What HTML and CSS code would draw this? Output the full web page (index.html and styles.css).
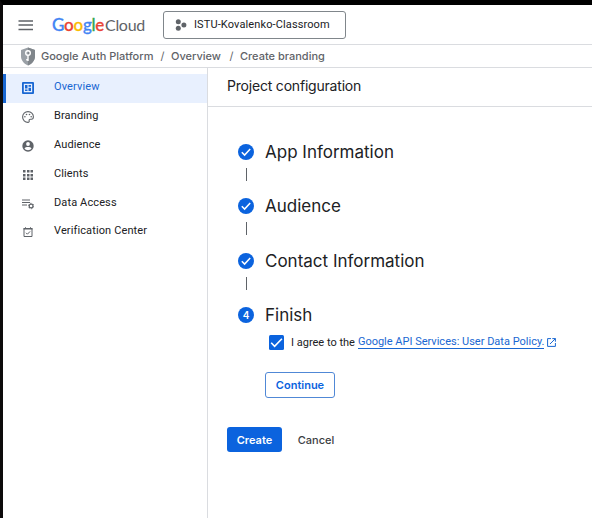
FILE: index.html
```html
<!DOCTYPE html>
<html lang="en">
<head>
<meta charset="utf-8">
<title>Create branding – Google Auth Platform</title>
<link rel="stylesheet" href="styles.css">
</head>
<body>
<div class="app">
  <header class="topbar">
    <svg class="menu" width="16" height="12" viewBox="0 0 16 12"><path d="M.5 2h14.5M.5 6h14.5M.5 10.500h14.500" stroke="#5f6368" stroke-width="1.500"/></svg>
    <div class="logo"><span class="google"><span class="b">G</span><span class="r">o</span><span class="y">o</span><span class="b">g</span><span class="g">l</span><span class="r">e</span></span><span class="cloud">Cloud</span></div>
    <div class="project">
      <svg width="12" height="12" viewBox="0 0 12 12" fill="#5f6368"><circle cx="3.300" cy="2.700" r="2.500"/><circle cx="3.300" cy="9.300" r="2.500"/><circle cx="8.900" cy="6" r="2.500"/></svg>
      <span>ISTU-Kovalenko-Classroom</span>
    </div>
  </header>
  <nav class="crumbs">
    <svg width="16" height="19" viewBox="0 0 16 19"><path d="M8 .5 15 3v6c0 4.500-3 7.800-7 9.500C4 16.800 1 13.500 1 9V3z" fill="#9aa0a6"/><path d="M8 .5 15 3v6c0 4.500-3 7.800-7 9.500z" fill="#80868b"/><circle cx="8" cy="6" r="2.300" fill="none" stroke="#fff" stroke-width="1.400"/><path d="M8 8.300V14M8 12.800H6.200" fill="none" stroke="#fff" stroke-width="1.400"/></svg>
    <span class="c1">Google Auth Platform</span><i>/</i><span class="c2">Overview</span><i>/</i><span class="c3">Create branding</span>
  </nav>
  <div class="body">
    <aside class="side">
      <a class="item active"><svg viewBox="0 0 12 12"><path fill="#1967d2" fill-rule="evenodd" d="M1 0h10a1 1 0 0 1 1 1v10a1 1 0 0 1-1 1H1a1 1 0 0 1-1-1V1a1 1 0 0 1 1-1zm.8 1.800v8.400h8.400V1.800z"/><path d="M3 3h2.500v3.500H3zM6.500 3H9v1.700H6.500zM3 7.500h2.500V9H3zM6.500 5.700H9V9H6.500z" fill="#1967d2"/></svg><span>Overview</span></a>
      <a class="item"><svg viewBox="0 0 12 12"><path d="M6 .6C3 .6.6 3 .6 6S3 11.400 6 11.400c.9 0 1.300-.6 1.200-1.300-.3-.9.100-1.900 1.200-1.900h1.100c1.100 0 1.900-.9 1.900-2.400C11.400 2.900 9 .6 6 .6z" fill="none" stroke="#5f6368" stroke-width="1.100"/><g fill="#5f6368"><circle cx="2.900" cy="5.800" r=".8"/><circle cx="4.500" cy="3.500" r=".8"/><circle cx="7.500" cy="3.500" r=".8"/><circle cx="9.200" cy="5.800" r=".8"/></g></svg><span>Branding</span></a>
      <a class="item"><svg viewBox="0 0 12 12"><circle cx="6" cy="6" r="5.700" fill="#5f6368"/><circle cx="6" cy="4" r="1.900" fill="#fff"/><path d="M2.500 8.500C3 7.300 4.700 6.900 6 6.900s3 .4 3.500 1.600C8.700 9.600 7.400 10.200 6 10.200S3.300 9.600 2.500 8.500z" fill="#fff"/></svg><span>Audience</span></a>
      <a class="item"><svg viewBox="0 0 12 12"><path d="M1 1h2.500v2.500H1zM5 1h2.500v2.500H5zM8.500 1H11v2.500H8.500zM1 5h2.500v2.500H1zM5 5h2.500v2.500H5zM8.500 5H11v2.500H8.500zM1 8.500h2.500V11H1zM5 8.500h2.500V11H5zM8.500 8.500H11V11H8.500z" fill="#5f6368"/></svg><span>Clients</span></a>
      <a class="item"><svg viewBox="0 0 12 12"><path d="M0 2h8M0 4.500h8M0 7h5" stroke="#5f6368" stroke-width="1.100"/><circle cx="9.100" cy="8" r="1.900" fill="none" stroke="#5f6368" stroke-width="1.200"/><circle cx="9.100" cy="8" r="2.700" fill="none" stroke="#5f6368" stroke-width=".8" stroke-dasharray="1.400 1.427"/></svg><span>Data Access</span></a>
      <a class="item"><svg viewBox="0 0 12 12"><path d="M2 2.500h8v8H2z" fill="none" stroke="#5f6368"/><path d="M1.500 2h9v1.500h-9zM3 1.300h1V2H3zM8 1.300h1V2H8z" fill="#5f6368"/><path d="m4 6.800 1.400 1.400 2.700-2.800" fill="none" stroke="#5f6368"/></svg><span>Verification Center</span></a>
    </aside>
    <main class="main">
      <h1><span>Project configuration</span></h1>
      <section class="steps">
        <div class="step"><div class="rail"><svg class="dot" viewBox="0 0 16 16"><circle cx="8" cy="8" r="8" fill="#0b63de"/><path d="m3.800 8.300 2.800 2.800 5.600-6" fill="none" stroke="#fff" stroke-width="1.500"/></svg><b></b></div><h2 class="h-app">App Information</h2></div>
        <div class="step"><div class="rail"><svg class="dot" viewBox="0 0 16 16"><circle cx="8" cy="8" r="8" fill="#0b63de"/><path d="m3.800 8.300 2.800 2.800 5.600-6" fill="none" stroke="#fff" stroke-width="1.500"/></svg><b></b></div><h2 class="h-aud">Audience</h2></div>
        <div class="step"><div class="rail"><svg class="dot" viewBox="0 0 16 16"><circle cx="8" cy="8" r="8" fill="#0b63de"/><path d="m3.800 8.300 2.800 2.800 5.600-6" fill="none" stroke="#fff" stroke-width="1.500"/></svg><b></b></div><h2 class="h-con">Contact Information</h2></div>
        <div class="step last"><div class="rail"><span class="num">4</span></div><h2 class="h-fin">Finish</h2></div>
      </section>
      <label class="agree">
        <svg class="check" width="15" height="15" viewBox="0 0 15 15"><rect width="15" height="15" rx="1.500" fill="#0b63de"/><path d="m2.200 7.800 3.400 3.500 7.300-7.600" fill="none" stroke="#fff" stroke-width="1.600"/></svg>
        <span class="lead">I agree to the</span>
        <a class="policy">Google API Services: User Data Policy.</a>
        <svg class="ext" width="9" height="9" viewBox="0 0 9 9"><path d="M4 .6H.6v7.800h7.800V5M5.300.6h3.100v3.100M8.400.6 3 6" fill="none" stroke="#1967d2"/></svg>
      </label>
      <button class="continue"><span>Continue</span></button>
      <div class="actions"><button class="create"><span>Create</span></button><button class="cancel"><span>Cancel</span></button></div>
    </main>
  </div>
</div>
</body>
</html>
```

FILE: styles.css
```css
* { box-sizing: border-box; }
body { margin: 0; background: #fff; font-family: Roboto, "Liberation Sans", sans-serif; color: #202124; }
.app { width: 592px; height: 518px; border-left: 3px solid #0c0a0b; border-top: 5px solid #000; overflow: hidden; }
svg { display: block; flex: none; }
.topbar { height: 40px; display: flex; align-items: center; border-bottom: 1px solid #dadce0; padding-left: 15px; }
.logo { display: flex; width: 94px; margin-left: 18px; font: 17px/20px Lato, sans-serif; white-space: nowrap; }
.google { width: 53px; font-weight: 500; -webkit-text-stroke: .3px currentColor; letter-spacing: -.25px; }
.cloud { color: #5f6368; font-size: 16px; letter-spacing: -.3px; }
.b { color: #4285f4; } .r { color: #ea4335; } .y { color: #fbbc04; } .g { color: #34a853; }
.project { height: 28px; width: 183px; margin-left: 17px; border: 1px solid #80868b; border-radius: 3px; display: flex; align-items: center; gap: 7px; padding-left: 11px; font-size: 11px; letter-spacing: .12px; }
.crumbs { height: 23px; display: flex; align-items: center; padding-left: 17px; border-bottom: 1px solid #dadce0; font: 500 11px/14px Inter, sans-serif; color: #5f6368; white-space: nowrap; }
.crumbs span { flex: none; }
.crumbs i { width: 17px; text-align: center; font-style: normal; font-weight: 400; }
.c1 { margin-left: 5px; width: 113px; }
.c2 { width: 52px; }
.body { display: flex; height: 450px; }
.side { width: 205px; border-right: 1px solid #dadce0; padding-top: 6px; display: flex; flex-direction: column; }
.item { height: 28.800px; display: flex; align-items: center; padding-left: 19px; gap: 20px; font-size: 11px; line-height: 14px; letter-spacing: .12px; }
.item svg { width: 12px; height: 12px; }
.item span { position: relative; top: -1px; }
.active { background: #e8f0fe; color: #1967d2; border-left: 3px solid #1967d2; padding-left: 16px; }
.main { flex: 1; display: flex; flex-direction: column; align-items: flex-start; }
h1 { margin: 0; width: 100%; height: 39px; border-bottom: 1px solid #dadce0; padding: 9px 0 0 19px; font: 400 14px/18px Inter, sans-serif; letter-spacing: -.2px; }
.steps { padding: 37px 0 0 30px; }
.step { display: flex; gap: 11px; height: 54.400px; }
.step.last { height: 22px; }
.rail { width: 16px; display: flex; flex-direction: column; align-items: center; }
.rail b { width: 1px; height: 13px; margin-top: 8px; background: #5f6368; }
.dot { width: 16px; height: 16px; }
.num { width: 16px; height: 16px; border-radius: 50%; background: #0b63de; color: #fff; font: 600 10px/16px Inter, sans-serif; text-align: center; }
h2 { margin: -3px 0 0; font: 400 17px/22px Inter, sans-serif; white-space: nowrap; height: 22px; }
.agree { display: flex; align-items: center; height: 16px; margin: 5px 0 0 61px; font-size: 11px; line-height: 13px; white-space: nowrap; }
.lead { margin-left: 7px; margin-right: 3px; }
.policy { color: #1967d2; border-bottom: 1px solid #1967d2; }
.ext { margin-left: 3px; }
button { border: 0; background: none; padding: 0; font: 500 11px/14px Inter, sans-serif; border-radius: 3px; }
.continue { width: 70px; height: 26px; margin: 22px 0 0 57px; border: 1px solid #5088d6; color: #0b63de; font-weight: 600; }
.actions { display: flex; margin: 29px 0 0 19px; }
.create { width: 55px; height: 25px; background: #0b63de; color: #fff; font-weight: 600; }
.cancel { width: 68px; color: #3c4043; }
```
